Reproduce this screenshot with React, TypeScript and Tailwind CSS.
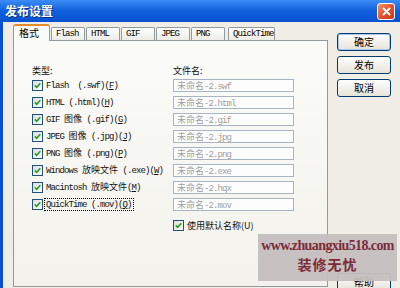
import React from "react";

const cjk = /[\u3000-\u9fff\uff00-\uffef]/;

// split text into CJK / latin runs so each gets its own font + spacing
const Mixed = ({ text }: { text: string }) => {
  const runs: { t: string; c: boolean }[] = [];
  for (const ch of text) {
    const c = cjk.test(ch);
    const last = runs[runs.length - 1];
    if (last && last.c === c) last.t += ch;
    else runs.push({ t: ch, c });
  }
  return (
    <>
      {runs.map((r, i) =>
        r.c ? (
          <span key={i} className="font-['Noto_Sans_CJK_SC'] tracking-normal">
            {r.t}
          </span>
        ) : (
          <span
            key={i}
            className="font-['Liberation_Mono'] tracking-[-0.9px] whitespace-pre"
          >
            {r.t}
          </span>
        )
      )}
    </>
  );
};

const CheckBox = () => (
  <div className="w-[11px] h-[11px] shrink-0 border border-[#1c5180] bg-gradient-to-br from-[#dcdcd7] to-white flex items-center justify-center">
    <svg width="7" height="7" viewBox="0 0 7 7">
      <path
        d="M0.8 3.4 L2.7 5.3 L6.3 1.2"
        fill="none"
        stroke="#21a121"
        strokeWidth="1.6"
      />
    </svg>
  </div>
);

const rows = [
  { label: "Flash  (.swf)(", key: "F", file: "未命名-2.swf" },
  { label: "HTML (.html)(", key: "H", file: "未命名-2.html" },
  { label: "GIF 图像 (.gif)(", key: "G", file: "未命名-2.gif" },
  { label: "JPEG 图像 (.jpg)(", key: "J", file: "未命名-2.jpg" },
  { label: "PNG 图像 (.png)(", key: "P", file: "未命名-2.png" },
  { label: "Windows 放映文件 (.exe)(", key: "W", file: "未命名-2.exe" },
  { label: "Macintosh 放映文件(", key: "M", file: "未命名-2.hqx" },
  { label: "QuickTime (.mov)(", key: "Q", file: "未命名-2.mov" },
];

const tabs = [
  { name: "Flash", w: "w-[34px]" },
  { name: "HTML", w: "w-[34px]" },
  { name: "GIF", w: "w-[34px]" },
  { name: "JPEG", w: "w-[34px]" },
  { name: "PNG", w: "w-[34px]" },
  { name: "QuickTime", w: "w-[47px] ml-[2px]" },
];

const Btn = ({ text, main }: { text: string; main?: boolean }) => (
  <div
    className={`w-[54px] h-[18px] shrink-0 rounded-[3px] border border-[#003c74] bg-gradient-to-b from-white to-[#e6e3d8] flex items-center justify-center text-[10px] text-black font-['Noto_Sans_CJK_SC'] leading-none ${
      main ? "shadow-[inset_0_0_0_1px_#a9c6f0]" : ""
    }`}
  >
    {text}
  </div>
);

export default function App() {
  return (
    <div className="relative w-[400px] h-[288px] overflow-hidden flex flex-col bg-[#efede5] select-none">
      {/* title bar */}
      <div className="h-[22px] shrink-0 flex items-center pl-[5px] bg-gradient-to-b from-[#3b8cf5] via-[#0d5fdc] to-[#0a52cf]">
        <span className="text-white text-[12px] font-bold font-['Noto_Sans_CJK_SC'] leading-none [text-shadow:1px_1px_0_#0a2f8a]">
          发布设置
        </span>
        <div className="ml-auto mr-[5px] w-[18px] h-[17px] rounded-[3px] border border-white bg-gradient-to-br from-[#f0906e] via-[#e2532f] to-[#c8381c] flex items-center justify-center">
          <svg width="9" height="9" viewBox="0 0 9 9">
            <path d="M1 1 L8 8 M8 1 L1 8" stroke="white" strokeWidth="1.8" />
          </svg>
        </div>
      </div>

      {/* body */}
      <div className="flex flex-1 border-l-[3px] border-[#0b50d2]">
        {/* tabs + panel */}
        <div className="pl-[10px] pt-[2px] flex flex-col">
          <div className="flex items-end h-[16px] gap-px">
            <div className="relative z-10 -mb-px w-[37px] h-[17px] rounded-t-[3px] border border-b-0 border-[#919b9c] border-t-[2px] border-t-[#e68b2c] bg-[#fcfcfb] text-[10px] text-black pl-[5px] pt-[1px] leading-[12px] font-['Noto_Sans_CJK_SC']">
              格式
            </div>
            {tabs.map((t) => (
              <div
                key={t.name}
                className={`${t.w} h-[13px] rounded-t-[2px] border border-b-0 border-[#919b9c] bg-gradient-to-b from-white to-[#ecebe6] text-[9px] leading-[12px] pl-[4px] text-black font-['Liberation_Mono'] tracking-[-0.9px]`}
              >
                {t.name}
              </div>
            ))}
          </div>
          <div className="w-[315px] h-[247px] border border-[#919b9c] bg-gradient-to-b from-[#fbfbf9] to-[#f3f2ec] pl-[18px] pt-[25px] text-[9px] leading-[10px] text-[#111]">
            <div className="flex h-[10px]">
              <div className="w-[141px] font-['Noto_Sans_CJK_SC'] text-[9px]">
                类型:
              </div>
              <div className="font-['Noto_Sans_CJK_SC'] text-[9px]">文件名:</div>
            </div>
            <div className="mt-[3px] flex flex-col gap-[4px]">
              {rows.map((r) => (
                <div key={r.file} className="flex items-center h-[13px]">
                  <div className="w-[141px] flex items-center">
                    <CheckBox />
                    <div
                      className={`ml-px px-px leading-[10px] whitespace-pre ${
                        r.key === "Q" ? "border border-dotted border-black" : "border border-transparent"
                      }`}
                    >
                      <Mixed text={r.label} />
                      <span className="font-['Liberation_Mono'] tracking-[-0.9px] underline">
                        {r.key}
                      </span>
                      <span className="font-['Liberation_Mono'] tracking-[-0.9px]">)</span>
                    </div>
                  </div>
                  <div className="w-[121px] h-[13px] border border-[#a9b4c2] bg-[#fdfdfd] pl-[3px] leading-[11px] text-[#9d9d9d] whitespace-pre">
                    <Mixed text={r.file} />
                  </div>
                </div>
              ))}
            </div>
            <div className="mt-[9px] ml-[141px] flex items-center gap-[3px]">
              <CheckBox />
              <span className="font-['Noto_Sans_CJK_SC'] text-[9px] leading-[10px]">
                使用默认名称(U)
              </span>
            </div>
          </div>
        </div>

        {/* buttons */}
        <div className="pl-[9px] pt-[11px] flex flex-col gap-[5px]">
          <Btn text="确定" main />
          <Btn text="发布" />
          <Btn text="取消" />
          <div className="mt-[171px]">
            <Btn text="帮助" />
          </div>
        </div>
      </div>

      {/* watermark overlay */}
      <div className="absolute left-[258px] top-[234px] w-[139px] h-[47px] bg-[#c4bfbe]/95 flex flex-col items-center pt-[4px] text-[#7d2b3b] font-bold">
        <div className="font-['Liberation_Serif'] text-[14px] leading-[16px] tracking-[-0.6px]">
          www.zhuangxiu518.com
        </div>
        <div className="font-['Noto_Sans_CJK_SC'] text-[14px] leading-[20px] tracking-[1px]">
          装修无忧
        </div>
      </div>
    </div>
  );
}
